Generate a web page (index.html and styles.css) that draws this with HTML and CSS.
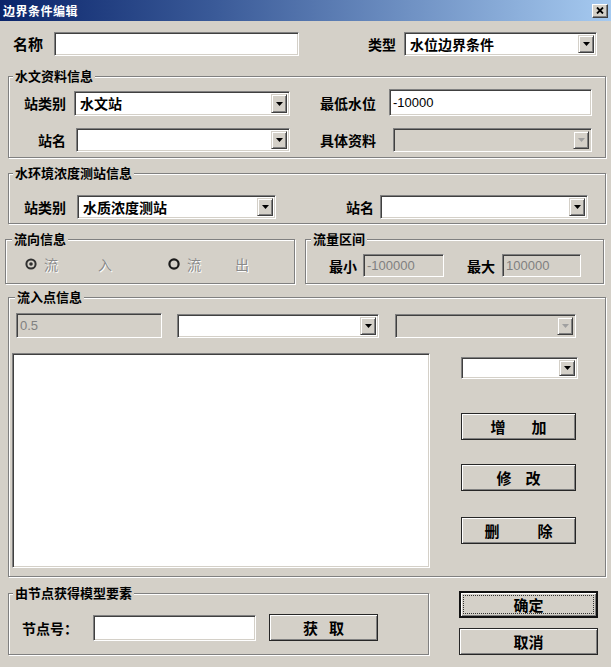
FILE: index.html
```html
<!DOCTYPE html>
<html>
<head>
<meta charset="utf-8">
<title>边界条件编辑</title>
<link rel="stylesheet" href="styles.css">
</head>
<body>
<div class="titlebar">
  <span class="title">边界条件编辑</span>
  <span class="close"><svg width="8" height="7" viewBox="0 0 8 7"><path d="M1 0.5L7 6.5M7 0.5L1 6.5" stroke="#000" stroke-width="1.8"/></svg></span>
</div>

<div class="row row-top">
  <span class="lbl lbl-name">名称</span>
  <div class="edit w-name"></div>
  <span class="lbl lbl-type">类型</span>
  <div class="combo w-type"><span class="val">水位边界条件</span><span class="drop"><svg width="7" height="4" viewBox="0 0 7 4"><path d="M0 0h7L3.5 4z"/></svg></span></div>
</div>

<div class="group g-hydro">
  <div class="legend">水文资料信息</div>
  <div class="row r-h1">
    <span class="lbl lbl-r57">站类别</span>
    <div class="combo w-h1"><span class="val">水文站</span><span class="drop"><svg width="7" height="4" viewBox="0 0 7 4"><path d="M0 0h7L3.5 4z"/></svg></span></div>
    <span class="lbl lbl-low">最低水位</span>
    <div class="edit w-low"><span class="num">-10000</span></div>
  </div>
  <div class="row r-h2">
    <span class="lbl lbl-r57">站名</span>
    <div class="combo w-h2"><span class="val"></span><span class="drop"><svg width="7" height="4" viewBox="0 0 7 4"><path d="M0 0h7L3.5 4z"/></svg></span></div>
    <span class="lbl lbl-data">具体资料</span>
    <div class="combo disabled w-data"><span class="val"></span><span class="drop"><svg width="7" height="4" viewBox="0 0 7 4"><path d="M0 0h7L3.5 4z"/></svg></span></div>
  </div>
</div>

<div class="group g-env">
  <div class="legend">水环境浓度测站信息</div>
  <div class="row r-env">
    <span class="lbl lbl-r57">站类别</span>
    <div class="combo w-e1"><span class="val">水质浓度测站</span><span class="drop"><svg width="7" height="4" viewBox="0 0 7 4"><path d="M0 0h7L3.5 4z"/></svg></span></div>
    <span class="lbl lbl-ename">站名</span>
    <div class="combo w-e2"><span class="val"></span><span class="drop"><svg width="7" height="4" viewBox="0 0 7 4"><path d="M0 0h7L3.5 4z"/></svg></span></div>
  </div>
</div>

<div class="mid">
  <div class="group g-dir">
    <div class="legend">流向信息</div>
    <div class="row r-radio">
      <svg class="radio r1" width="12" height="12" viewBox="0 0 12 12"><circle cx="6" cy="6" r="4.6" fill="#d4d0c8" stroke="#303030" stroke-width="2"/><circle cx="6" cy="6" r="1.8" fill="#303030"/></svg>
      <span class="dis-txt t-liu">流</span><span class="dis-txt t-ru">入</span>
      <svg class="radio r2" width="12" height="12" viewBox="0 0 12 12"><circle cx="6" cy="6" r="4.6" fill="none" stroke="#1a1a1a" stroke-width="2.2"/></svg>
      <span class="dis-txt t-liu">流</span><span class="dis-txt t-chu">出</span>
    </div>
  </div>
  <div class="group g-range">
    <div class="legend">流量区间</div>
    <div class="row r-range">
      <span class="lbl lbl-min">最小</span>
      <div class="edit disabled w-min"><span class="num">-100000</span></div>
      <span class="lbl lbl-max">最大</span>
      <div class="edit disabled w-max"><span class="num">100000</span></div>
    </div>
  </div>
</div>

<div class="group g-in">
  <div class="legend">流入点信息</div>
  <div class="row r-in">
    <div class="edit disabled w-in1"><span class="num">0.5</span></div>
    <div class="combo w-in2"><span class="val"></span><span class="drop"><svg width="7" height="4" viewBox="0 0 7 4"><path d="M0 0h7L3.5 4z"/></svg></span></div>
    <div class="combo disabled w-in3"><span class="val"></span><span class="drop"><svg width="7" height="4" viewBox="0 0 7 4"><path d="M0 0h7L3.5 4z"/></svg></span></div>
  </div>
  <div class="in-body">
    <div class="listbox"></div>
    <div class="side">
      <div class="combo w-side"><span class="val"></span><span class="drop"><svg width="7" height="4" viewBox="0 0 7 4"><path d="M0 0h7L3.5 4z"/></svg></span></div>
      <div class="btn b-side b-add"><span>增</span><span>加</span></div>
      <div class="btn b-side b-mod"><span>修</span><span>改</span></div>
      <div class="btn b-side b-del"><span>删</span><span>除</span></div>
    </div>
  </div>
</div>

<div class="bottom">
  <div class="group g-node">
    <div class="legend">由节点获得模型要素</div>
    <div class="row r-node">
      <span class="lbl lbl-node">节点号：</span>
      <div class="edit w-node"></div>
      <div class="btn b-get"><span>获</span><span>取</span></div>
    </div>
  </div>
  <div class="actions">
    <div class="btn b-ok"><span class="focus">确定</span></div>
    <div class="btn b-cancel"><span>取消</span></div>
  </div>
</div>
</body>
</html>
```

FILE: styles.css
```css
* { box-sizing: border-box; }
html, body { margin: 0; padding: 0; }
body {
  width: 611px;
  height: 667px;
  overflow: hidden;
  background: #d4d0c8;
  font-family: "Noto Sans CJK SC", sans-serif;
  font-weight: 700;
  color: #000;
}

/* title bar */
.titlebar {
  height: 21px;
  background: linear-gradient(to right, #0a246a 0%, #3a5a98 35%, #a6caf0 100%);
  display: flex;
  align-items: center;
  justify-content: space-between;
  padding: 0 3px 0 3px;
}
.title { color: #fff; font-size: 12px; line-height: 14px; letter-spacing: 0.5px; }
.close {
  width: 16px; height: 14px;
  background: #d4d0c8;
  border: 1px solid; border-color: #fff #404040 #404040 #fff;
  box-shadow: inset -1px -1px 0 #808080;
  display: flex; align-items: center; justify-content: center;
}

/* generic */
.row { display: flex; align-items: center; }
.lbl { font-size: 14px; line-height: 16px; white-space: nowrap; flex: none; }
.lbl-r57 { width: 57px; text-align: right; }

.edit {
  flex: none;
  background: #fff;
  border: 1px solid; border-color: #808080 #fff #fff #808080;
  box-shadow: inset 1px 1px 0 #404040, inset -1px -1px 0 #d4d0c8;
  display: flex; align-items: center;
  padding-left: 3px;
}
.edit.disabled { background: #d4d0c8; }
.num { font-family: "Liberation Sans", Arial, sans-serif; font-weight: 400; font-size: 13px; line-height: 15px; }
.edit.disabled .num { color: #808080; }

.combo {
  flex: none;
  height: 24px;
  background: #fff;
  border: 1px solid; border-color: #808080 #fff #fff #808080;
  box-shadow: inset 1px 1px 0 #404040, inset -1px -1px 0 #d4d0c8;
  display: flex;
  padding: 2px;
}
.combo.disabled { background: #d4d0c8; }
.combo .val { flex: 1; font-size: 14px; line-height: 18px; padding-left: 3px; white-space: nowrap; }
.drop {
  width: 16px;
  background: #d4d0c8;
  border: 1px solid; border-color: #d4d0c8 #404040 #404040 #d4d0c8;
  box-shadow: inset 1px 1px 0 #fff, inset -1px -1px 0 #808080;
  display: flex; align-items: center; justify-content: center;
}
.drop svg { fill: #000; }
.combo.disabled .drop svg { fill: #a0a0a0; }

.btn {
  flex: none;
  background: #d4d0c8;
  border: 1px solid #262626;
  box-shadow: inset 1px 1px 0 #fff, inset -1px -1px 0 #808080;
  display: flex; align-items: center; justify-content: center;
  font-size: 14px; line-height: 16px;
}

/* group boxes */
.group {
  flex: none;
  border: 1px solid #808080;
  box-shadow: 1px 1px 0 #fff, inset 1px 1px 0 #fff;
}
.legend {
  display: block;
  width: fit-content;
  height: 16px;
  margin-top: -9px;
  margin-left: 4px;
  padding: 0 2px;
  background: #d4d0c8;
  font-size: 13px;
  line-height: 16px;
  white-space: nowrap;
}

/* top row */
.row-top { margin-top: 11px; height: 24px; }
.lbl-name { margin-left: 13px; width: 41px; font-size: 15px; }
.w-name { width: 245px; height: 24px; }
.lbl-type { margin-left: 69px; width: 36px; }
.w-type { width: 193px; height: 24px; }

/* hydrology group */
.g-hydro { margin: 20px 0 0 8px; width: 598px; padding-bottom: 5px; }
.r-h1 { margin-top: 5px; height: 27px; }
.w-h1 { margin-left: 8px; width: 216px; height: 25px; margin-top: 2px; }
.lbl-low { margin-left: 30px; width: 56px; }
.w-low { margin-left: 13px; width: 203px; height: 27px; }
.r-h2 { margin-top: 12px; height: 24px; }
.w-h2 { margin-left: 10px; width: 214px; }
.lbl-data { margin-left: 30px; width: 58px; }
.w-data { margin-left: 15px; width: 199px; }

/* environment group */
.g-env { margin: 15px 0 0 8px; width: 598px; padding-bottom: 4px; }
.r-env { margin-top: 14px; height: 24px; }
.w-e1 { margin-left: 11px; width: 199px; }
.lbl-ename { margin-left: 70px; width: 28px; }
.w-e2 { margin-left: 6px; width: 208px; }

/* middle row */
.mid { display: flex; margin-top: 15px; }
.g-dir { margin-left: 5px; width: 290px; padding-bottom: 10px; }
.g-dir .legend { margin-left: 6px; }
.r-radio { margin-top: 8px; height: 18px; }
.radio { flex: none; }
.r1 { margin-left: 19px; }
.r2 { margin-left: 56px; }
.dis-txt {
  font-size: 14px; line-height: 16px; font-weight: 400;
  color: #8a8a8a; text-shadow: 1px 1px 0 #fff;
}
.t-liu { margin-left: 7px; }
.t-ru { margin-left: 40px; }
.t-chu { margin-left: 34px; }

.g-range { margin-left: 10px; width: 299px; padding-bottom: 6px; }
.g-range .legend { margin-left: 5px; }
.r-range { margin-top: 7px; height: 23px; }
.lbl-min { margin-left: 23px; width: 28px; }
.w-min { margin-left: 6px; width: 81px; height: 23px; }
.lbl-max { margin-left: 23px; width: 28px; }
.w-max { margin-left: 7px; width: 79px; height: 23px; }

/* inflow group */
.g-in { margin: 13px 0 0 8px; width: 598px; padding-bottom: 8px; }
.g-in .legend { margin-left: 6px; }
.r-in { margin-top: 8px; height: 25px; }
.w-in1 { margin-left: 7px; width: 146px; height: 25px; }
.w-in2 { margin-left: 15px; width: 202px; }
.w-in3 { margin-left: 16px; width: 181px; }
.in-body { display: flex; margin-top: 15px; }
.listbox {
  flex: none;
  margin-left: 3px;
  width: 418px; height: 215px;
  background: #fff;
  border: 1px solid; border-color: #808080 #fff #fff #808080;
  box-shadow: inset 1px 1px 0 #404040, inset -1px -1px 0 #d4d0c8;
}
.side { margin-left: 31px; display: flex; flex-direction: column; }
.w-side { margin-top: 4px; width: 117px; height: 22px; }
.b-side { width: 115px; height: 27px; font-size: 15px; }
.b-add { margin-top: 34px; gap: 26px; }
.b-mod { margin-top: 24px; gap: 14px; }
.b-del { margin-top: 26px; gap: 38px; }

/* bottom */
.bottom { display: flex; margin-top: 14px; }
.g-node { margin: 2px 0 0 8px; width: 421px; padding-bottom: 11px; }
.r-node { margin-top: 13px; height: 27px; }
.lbl-node { margin-left: 13px; width: 58px; }
.w-node { margin-left: 13px; width: 163px; height: 26px; }
.b-get { margin-left: 13px; width: 109px; height: 27px; gap: 11px; font-size: 15px; }

.actions { margin-left: 30px; display: flex; flex-direction: column; }
.b-ok {
  width: 139px; height: 27px;
  border: 2px solid #111;
  box-shadow: inset 1px 1px 0 #fff, inset -1px -1px 0 #808080;
  padding: 2px;
  font-size: 15px;
}
.b-ok .focus {
  flex: 1; align-self: stretch;
  border: 1px dotted #333;
  display: flex; align-items: center; justify-content: center;
}
.b-cancel { margin-top: 10px; width: 139px; height: 27px; font-size: 15px; }
```
